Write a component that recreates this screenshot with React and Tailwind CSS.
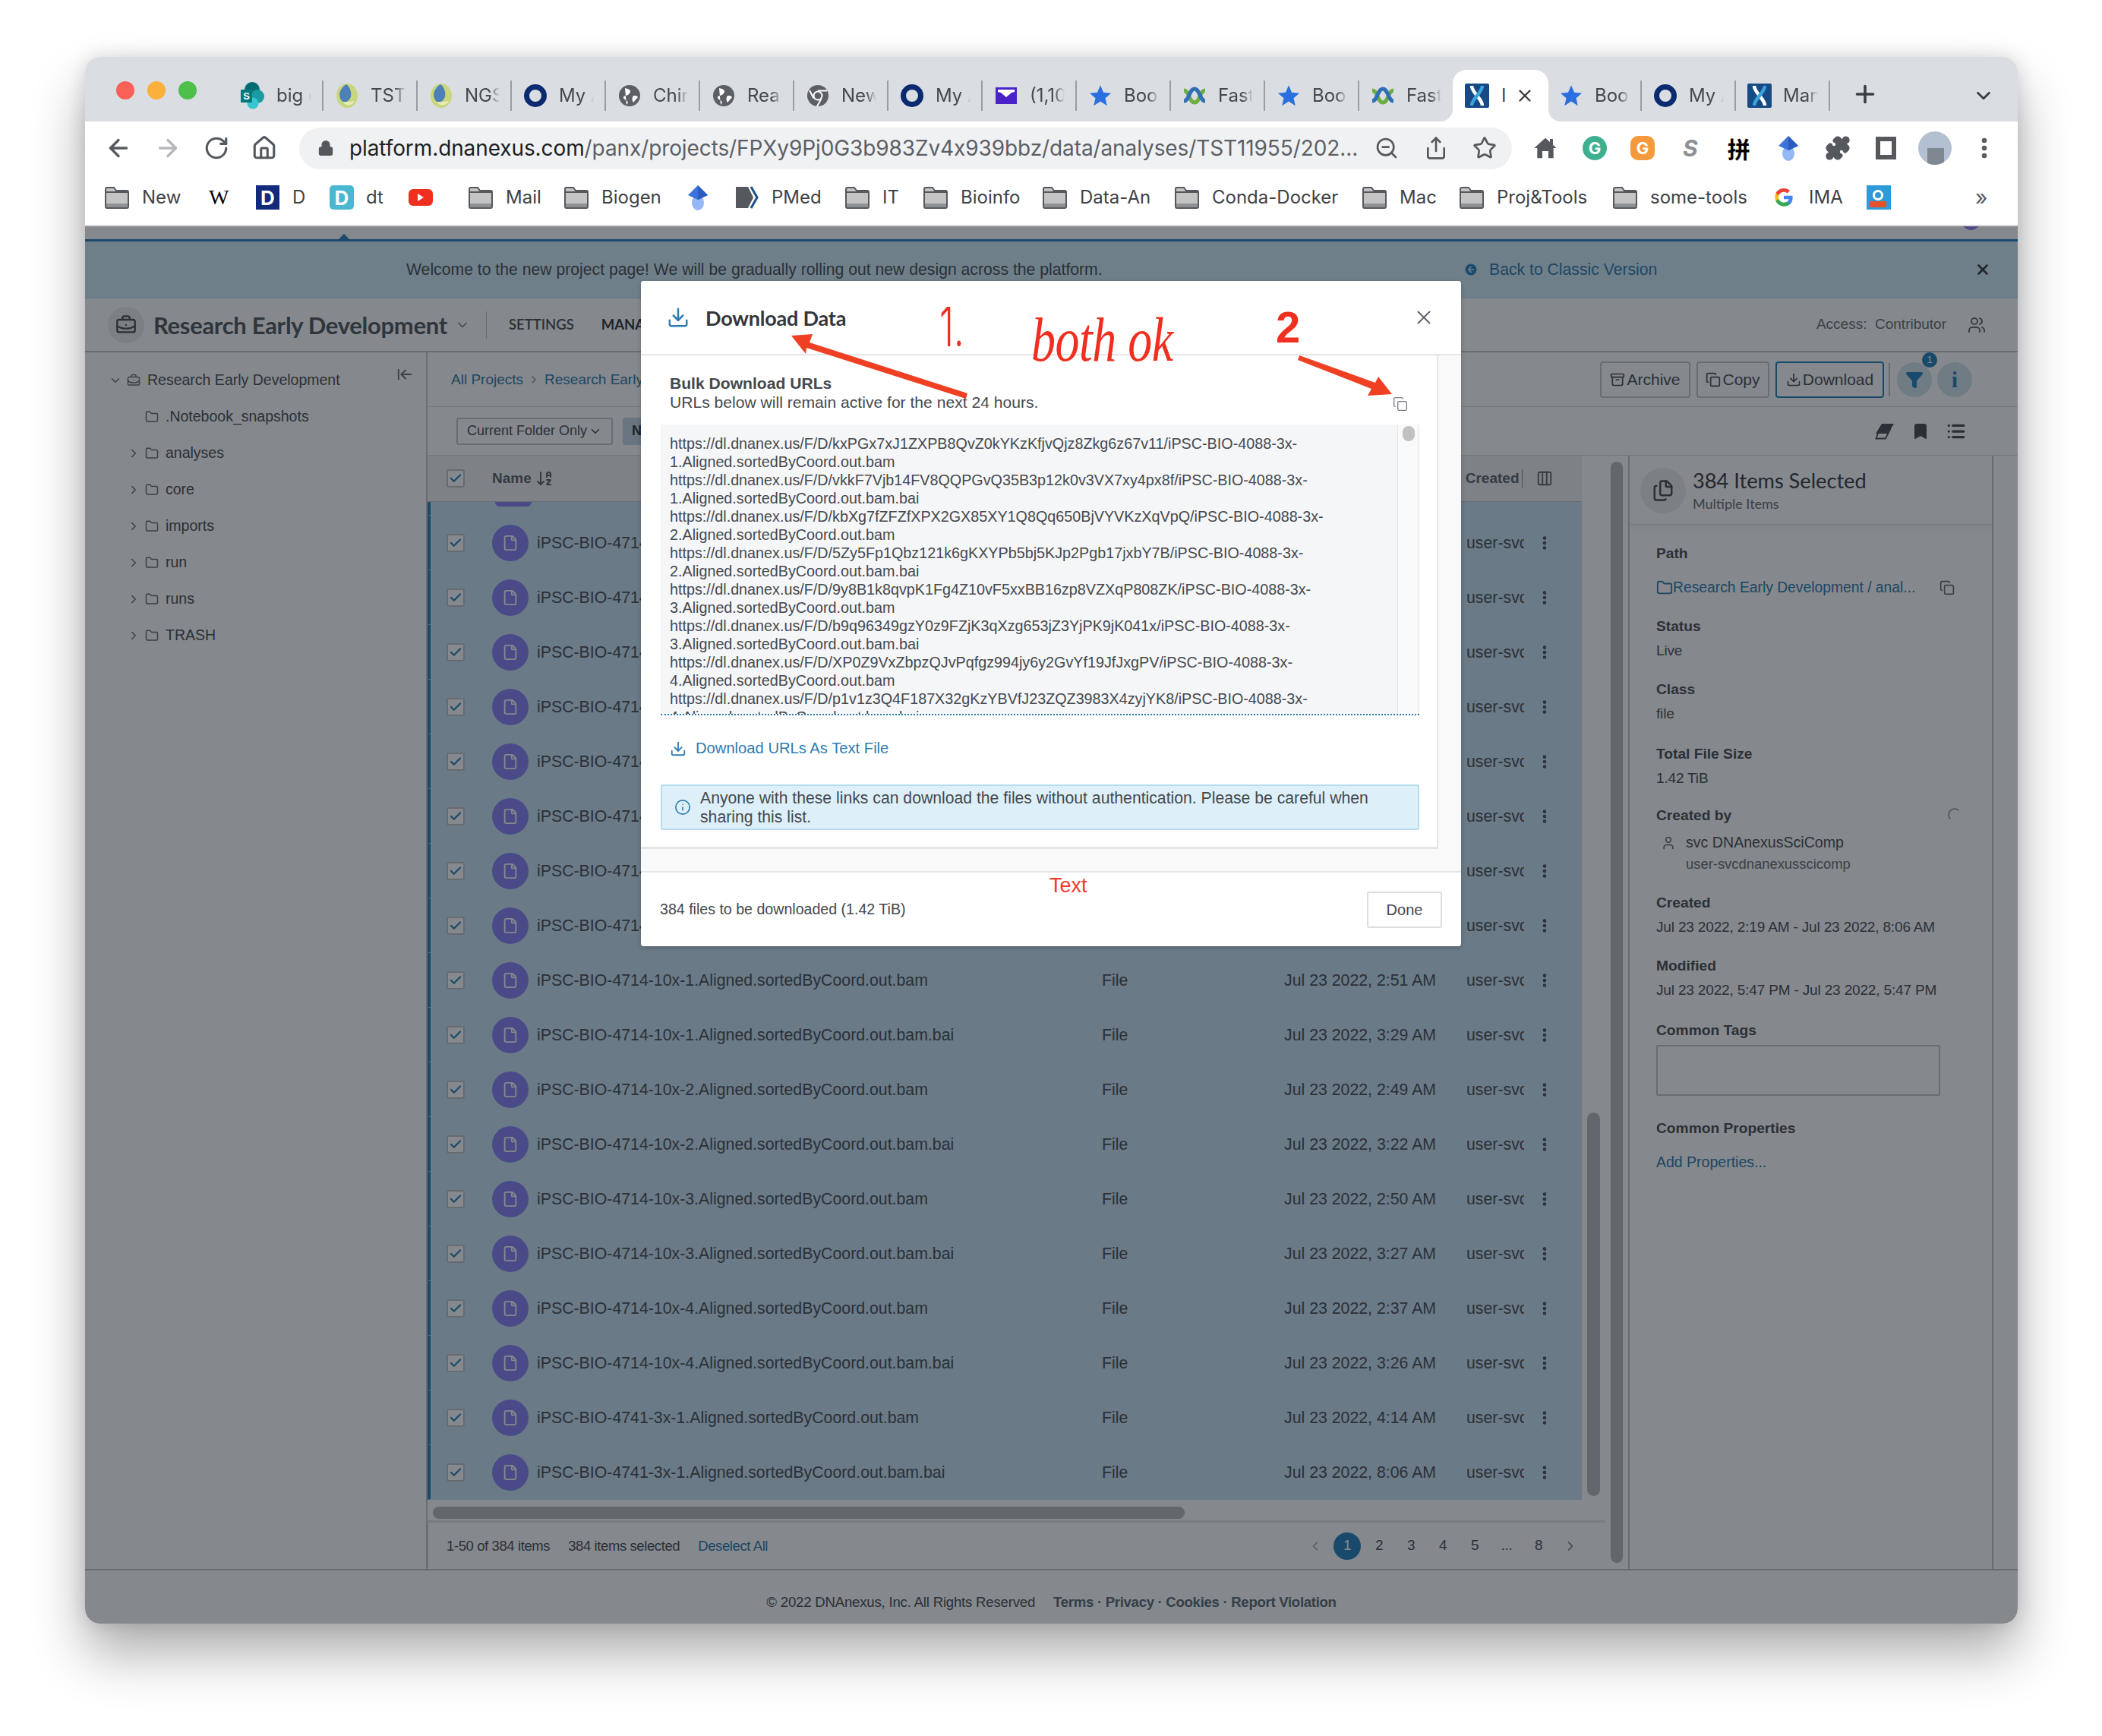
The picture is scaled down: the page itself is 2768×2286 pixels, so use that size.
import React from 'react';
import {
  ArrowLeft, ArrowRight, RotateCw, Home, Lock, ZoomOut, Share, Star, MoreVertical, Plus, X, ChevronDown,
  ChevronRight, ChevronLeft, Copy, Download, Archive, Folder, BriefcaseBusiness, Check, File, Files, Filter, Bookmark, Info,
  List, Columns3, User, Users, ArrowLeftToLine, ArrowDownAZ, ArrowLeftCircle, Puzzle,
} from 'lucide-react';

/* favicons, drawn by hand */
const Ring = () => (
  <svg width="30" height="32" viewBox="0 0 30 32"><circle cx="15" cy="16" r="11.5" fill="none" stroke="#0b2a6f" strokeWidth="7" /></svg>
);
const Globe = () => (
  <svg width="30" height="32" viewBox="0 0 30 32">
    <circle cx="15" cy="16" r="14" fill="#5c6066" />
    <path d="M9 6c5 1 9 3 6 7s-7 2-8 5 5 3 6 7l-2 3M20 16c3 0 5 0 6 2l-6 7c-2-3-2-6 0-9z" fill="#fff" />
  </svg>
);
const ChromeIcon = () => (
  <svg width="30" height="32" viewBox="0 0 30 32">
    <circle cx="15" cy="16" r="14" fill="#5c6066" />
    <circle cx="15" cy="16" r="6.5" fill="#fff" />
    <circle cx="15" cy="16" r="4.5" fill="#5c6066" />
    <path d="M15 9.5h12M9.5 19.5L4 9M19.5 20L14 30" stroke="#fff" strokeWidth="2" />
  </svg>
);
const Sphere = () => (
  <svg width="30" height="34" viewBox="0 0 30 34">
    <ellipse cx="15" cy="17" rx="14" ry="16" fill="#c9d67e" />
    <path d="M14 2C6 7 2 16 8 24c6 4 14-2 12-12-1-5-3-8-6-10z" fill="#4d7fb8" />
    <path d="M9 25c6 7 13 5 16-1-6 1-11 2-16 1z" fill="#e6ecb8" />
  </svg>
);
const SharePoint = () => (
  <svg width="34" height="38" viewBox="0 0 34 38">
    <circle cx="16" cy="11" r="10" fill="#036c70" />
    <circle cx="23" cy="20" r="9" fill="#1a9ba1" />
    <circle cx="17" cy="29" r="7.5" fill="#37c6d0" />
    <rect x="1" y="11" width="15" height="17" rx="1" fill="#03787c" />
    <text x="8.5" y="24" fontSize="13" fontWeight="700" fill="#fff" textAnchor="middle" fontFamily="Liberation Sans">S</text>
  </svg>
);
const Mail = () => (
  <svg width="30" height="32" viewBox="0 0 30 32">
    <rect x="1" y="5" width="28" height="22" fill="#4b22c9" />
    <path d="M4 8h22v3l-4 1-7 6-7-6-4-1z" fill="#fff" />
  </svg>
);
const BlueStar = () => (
  <svg width="30" height="32" viewBox="0 0 24 24"><path d="M12 1l3.2 7.6 8 .7-6 5.3 1.8 8L12 18l-7 4.6 1.8-8-6-5.3 8-.7z" fill="#2a6fe0" /></svg>
);
const Fast = () => (
  <svg width="34" height="30" viewBox="0 0 34 30" fill="none">
    <path d="M3 8c7 0 7 16 14 16S24 8 31 8" stroke="#6cae3f" strokeWidth="5" />
    <path d="M3 22c7 0 7-16 14-16s7 16 14 16" stroke="#2f6fb5" strokeWidth="5" />
  </svg>
);
const Dx = () => (
  <svg width="32" height="32" viewBox="0 0 32 32">
    <rect width="32" height="32" rx="2" fill="#174a85" />
    <path d="M9 3c0 9 14 17 14 26" stroke="#fff" strokeWidth="4.5" fill="none" />
    <path d="M23 3c0 9-14 17-14 26" stroke="#38a3dc" strokeWidth="4.5" fill="none" />
  </svg>
);
const Diamond = () => (
  <svg width="30" height="34" viewBox="0 0 30 34">
    <ellipse cx="15" cy="24" rx="8" ry="10" fill="#94b8f5" />
    <path d="M15 1l13 13-13 6L2 14z" fill="#3d74db" />
    <path d="M15 1v19l13-6z" fill="#2c5cc0" />
  </svg>
);
const BookmarkFolder = () => (
  <svg width="32" height="30" viewBox="0 0 32 30" className="shrink-0">
    <path d="M1 4a2 2 0 0 1 2-2h9l3 4h14a2 2 0 0 1 2 2v19a2 2 0 0 1-2 2H3a2 2 0 0 1-2-2z" fill="#c4c4c4" stroke="#55585d" strokeWidth="2" />
    <path d="M1 8h30" stroke="#55585d" strokeWidth="2" />
    <rect x="2" y="23" width="28" height="5" fill="#8f9194" />
  </svg>
);
const EraserIcon = () => (
  <svg width="26" height="22" viewBox="0 0 26 22">
    <path d="M9 1h16l-8 13H1z" fill="#4a4f54" />
    <path d="M6 8.500h14L14 20.500H1.500z" fill="none" stroke="#4a4f54" strokeWidth="1.800" />
  </svg>
);

const tabs = [
  { icon: <SharePoint />, label: 'big o' },
  { icon: <Sphere />, label: 'TST1' },
  { icon: <Sphere />, label: 'NGS' },
  { icon: <Ring />, label: 'My A' },
  { icon: <Globe />, label: 'Chir' },
  { icon: <Globe />, label: 'Rea' },
  { icon: <ChromeIcon />, label: 'New' },
  { icon: <Ring />, label: 'My A' },
  { icon: <Mail />, label: '(1,10' },
  { icon: <BlueStar />, label: 'Boo' },
  { icon: <Fast />, label: 'Fast' },
  { icon: <BlueStar />, label: 'Boo' },
  { icon: <Fast />, label: 'Fast', noSep: true },
  { active: true, icon: <Dx />, label: 'I' },
  { icon: <BlueStar />, label: 'Boo' },
  { icon: <Ring />, label: 'My A' },
  { icon: <Dx />, label: 'Man' },
];

function TabStrip() {
  return (
    <div className="flex h-[85px] shrink-0 bg-[#dadde2] pt-[17px] relative">
      <div className="flex gap-[17px] pl-[41px] pr-[43px] pt-[15px]">
        <span className="h-6 w-6 rounded-full bg-[#f96057]" />
        <span className="h-6 w-6 rounded-full bg-[#fbb03b]" />
        <span className="h-6 w-6 rounded-full bg-[#4dbf4a]" />
      </div>
      {tabs.map((t, i) =>
        t.active ? (
          <div key={i} className="relative flex h-[68px] w-[126px] shrink-0 items-center rounded-t-[18px] bg-white pl-[16px] -ml-px -mr-px">
            {t.icon}
            <span className="ml-[16px] text-[24px] text-[#45484d]">{t.label}</span>
            <X size={26} strokeWidth={2.2} className="ml-[12px] text-[#3a3d42]" />
            <span className="absolute -left-4 bottom-0 h-4 w-4 bg-white"><span className="block h-4 w-4 rounded-br-[16px] bg-[#dadde2]" /></span>
            <span className="absolute -right-4 bottom-0 h-4 w-4 bg-white"><span className="block h-4 w-4 rounded-bl-[16px] bg-[#dadde2]" /></span>
          </div>
        ) : (
          <div key={i} className="flex h-[68px] w-[124px] shrink-0 items-center">
            <div className={`flex h-[40px] w-[124px] items-center pl-[14px] ${t.noSep ? '' : 'border-r-2 border-[#9a9da2]'}`}>
              <span className="flex w-[34px] shrink-0 justify-center">{t.icon}</span>
              <span className="ml-[14px] w-[46px] overflow-hidden whitespace-nowrap text-[24px] text-[#45484d] [mask-image:linear-gradient(90deg,#000_70%,transparent)]">{t.label}</span>
            </div>
          </div>
        )
      )}
      <Plus size={36} strokeWidth={2.4} className="ml-[28px] mt-[14px] text-[#3a3d42]" />
      <ChevronDown size={30} strokeWidth={2.2} className="absolute right-[30px] top-[36px] text-[#3a3d42]" />
    </div>
  );
}

function BrowserToolbar() {
  return (
    <div className="flex h-[70px] shrink-0 items-center bg-white">
      <div className="flex w-[282px] items-center pl-[26px] gap-[29px]">
        <ArrowLeft size={36} strokeWidth={2.2} className="text-[#55585d]" />
        <ArrowRight size={36} strokeWidth={2.2} className="text-[#b5b7ba]" />
        <RotateCw size={34} strokeWidth={2.2} className="text-[#55585d]" />
        <Home size={34} strokeWidth={2.2} className="text-[#55585d]" />
      </div>
      <div className="flex h-[55px] w-[1597px] items-center rounded-full bg-[#f0f1f3] pl-[24px]">
        <Lock size={22} fill="#55585d" className="text-[#55585d]" />
        <span className="ml-[20px] w-[1320px] whitespace-nowrap text-[28px] tracking-[-0.1px] text-[#5c5f64]">
          <span className="text-[#1d1f22]">platform.dnanexus.com</span>/panx/projects/FPXy9Pj0G3b983Zv4x939bbz/data/analyses/TST11955/202...
        </span>
        <ZoomOut size={32} strokeWidth={2} className="ml-[30px] text-[#55585d]" />
        <Share size={32} strokeWidth={2} className="ml-[33px] text-[#55585d]" />
        <Star size={32} strokeWidth={2} className="ml-[32px] text-[#55585d]" />
      </div>
      <div className="flex items-center">
        <svg width="32" height="34" viewBox="0 0 24 24" className="ml-[28px]" fill="#55585d"><path d="M12 2 1 12h3v10h5v-7h6v7h5V12h3l-3.500-3.200V3h-3v3z" /></svg>
        <span className="ml-[33px] flex h-8 w-8 items-center justify-center rounded-full bg-[#3fb08f] text-[22px] font-bold text-white">G</span>
        <span className="ml-[31px] flex h-8 w-8 items-center justify-center rounded-[10px] bg-[#f59a3c] text-[22px] font-bold text-white">G</span>
        <span className="ml-[37px] text-[30px] font-bold italic text-[#8c8f93]">S</span>
        <span className="ml-[39px] text-[30px] font-bold text-black [font-family:'Noto_Sans_CJK_SC',sans-serif]">拼</span>
        <span className="ml-[35px]"><Diamond /></span>
        <Puzzle size={34} fill="#55585d" className="ml-[33px] text-[#55585d]" />
        <span className="ml-[33px] h-[30px] w-[27px] border-[6px] border-[#55585d]" />
        <span className="ml-[29px] relative h-[44px] w-[44px] overflow-hidden rounded-full bg-[#b2c0d2]">
          <span className="absolute bottom-0 left-[12px] h-[22px] w-[22px] bg-[#7f8790]" />
        </span>
        <MoreVertical size={34} strokeWidth={2.6} className="ml-[26px] text-[#55585d]" />
      </div>
    </div>
  );
}

const bookmarks = [
  { w: 'w-[140px]', folder: true, label: 'New' },
  { w: 'w-[59px]', icon: <span className="ml-[-3px] text-[28px] text-black [font-family:'Liberation_Serif',serif]">W</span> },
  { w: 'w-[97px]', icon: <span className="flex h-8 w-[31px] items-center justify-center bg-[#122a7c] text-[26px] font-bold text-white">D</span>, label: 'D', gap: 'gap-[17px]' },
  { w: 'w-[104px]', icon: <span className="flex h-8 w-8 items-center justify-center rounded-[5px] bg-[#4ab7d3] text-[26px] font-bold text-white">D</span>, label: 'dt', gap: 'gap-[16px]' },
  { w: 'w-[79px]', icon: <span className="flex h-[22px] w-8 items-center justify-center rounded-[6px] bg-[#f0301e]"><span className="h-0 w-0 border-y-[5px] border-l-[8px] border-y-transparent border-l-white" /></span> },
  { w: 'w-[126px]', folder: true, label: 'Mail' },
  { w: 'w-[161px]', folder: true, label: 'Biogen' },
  { w: 'w-[64px]', icon: <Diamond /> },
  { w: 'w-[145px]', icon: <svg width="32" height="32" viewBox="0 0 32 32"><path d="M1 2h16l7 14-7 14H1z" fill="#55585d" /><path d="M21 2l8 14-8 14" stroke="#1c4f8c" strokeWidth="3" fill="none" /></svg>, label: 'PMed', gap: 'gap-[16px]' },
  { w: 'w-[103px]', folder: true, label: 'IT' },
  { w: 'w-[157px]', folder: true, label: 'Bioinfo' },
  { w: 'w-[174px]', folder: true, label: 'Data-An' },
  { w: 'w-[247px]', folder: true, label: 'Conda-Docker' },
  { w: 'w-[128px]', folder: true, label: 'Mac' },
  { w: 'w-[202px]', folder: true, label: 'Proj&Tools' },
  { w: 'w-[211px]', folder: true, label: 'some-tools' },
  {
    w: 'w-[123px]',
    icon: (
      <svg width="28" height="30" viewBox="0 0 24 24">
        <path d="M22 12c0-.8 0-1.500-.2-2H12v4h5.600c-.3 1.400-1 2.500-2.200 3.300v2.700h3.500C21 18 22 15.300 22 12z" fill="#4285f4" />
        <path d="M12 22c2.800 0 5.100-.9 6.900-2.500l-3.500-2.700c-.9.600-2.100 1-3.400 1-2.700 0-5-1.800-5.800-4.300H3v2.800C4.700 19.800 8.100 22 12 22z" fill="#34a853" />
        <path d="M6.200 13.500c-.4-1.200-.4-2.500 0-3.700V7H3c-1.300 2.700-1.300 6.300 0 9z" fill="#fbbc05" />
        <path d="M12 5.800c1.500 0 2.900.5 3.900 1.500l3-3C17.100 2.700 14.800 1.800 12 1.800 8.100 1.800 4.700 4 3 7l3.200 2.800C7 7.500 9.300 5.800 12 5.800z" fill="#ea4335" />
      </svg>
    ),
    label: 'IMA',
    gap: 'gap-[19px]',
  },
  { w: 'w-[146px]', icon: <span className="relative h-8 w-8 bg-[#2e9bd8]"><span className="absolute left-[8px] top-[6px] h-[14px] w-[14px] rounded-full border-[3px] border-white" /><span className="absolute bottom-[3px] left-[4px] h-[8px] w-[22px] bg-[#e8502d]" /></span> },
];

function BookmarkBar() {
  return (
    <div className="flex h-[68px] shrink-0 items-center border-b-2 border-[#d9d9d9] bg-white pb-[6px] pl-[26px] text-[24px] text-[#3f4246]">
      {bookmarks.map((b, i) => (
        <div key={i} className={`flex shrink-0 items-center ${b.w} ${b.gap || 'gap-[17px]'}`}>
          {b.folder ? <BookmarkFolder /> : b.icon}
          {b.label && <span className="whitespace-nowrap">{b.label}</span>}
        </div>
      ))}
      <span className="-ml-[3px] text-[28px] text-[#55585d]">»</span>
    </div>
  );
}

function Banner() {
  return (
    <>
      <div className="relative h-[17px] overflow-hidden bg-white">
        <span className="absolute bottom-0 left-[334px] h-0 w-0 border-x-[7px] border-b-[7px] border-x-transparent border-b-[#2983bd]" />
        <span className="absolute right-[49px] top-[-20px] h-[25px] w-[25px] rounded-full bg-[#8b83f7]" />
      </div>
      <div className="h-[3px] bg-[#2983bd]" />
      <div className="flex h-[75px] items-center border-b border-[#b9d9e8] bg-[#d3edf9] pl-[423px] text-[21.200px] text-[#4a4f54]">
        <span className="w-[1392px]">Welcome to the new project page! We will be gradually rolling out new design across the platform.</span>
        <ArrowLeftCircle size={20} fill="#2983bd" className="text-[#d3edf9]" />
        <span className="ml-[14px] w-[640px] text-[#2f7cb0]">Back to Classic Version</span>
        <X size={22} strokeWidth={3} className="ml-[-1px] text-[#3a3d42]" />
      </div>
    </>
  );
}

function ProjectHeader() {
  return (
    <div className="flex h-[71px] items-center border-b-2 border-[#c6c9cc] bg-white pl-[30px]">
      <span className="flex h-12 w-12 items-center justify-center rounded-full bg-[#eceef0]"><BriefcaseBusiness size={28} className="text-[#4a4f54]" /></span>
      <span className="ml-[12px] mt-[2px] whitespace-nowrap text-[31px] font-bold tracking-[-0.3px] text-[#55595e] [font-family:Lato,sans-serif]">Research Early Development</span>
      <ChevronDown size={20} className="ml-[10px] text-[#7a7e83]" />
      <span className="ml-[21px] h-9 w-px bg-[#c6c9cc]" />
      <span className="ml-[29px] text-[18.500px] font-semibold text-[#4a4f54] [font-family:Lato,sans-serif]">SETTINGS</span>
      <span className="ml-[36px] text-[18.500px] font-bold text-[#33373c] [font-family:Lato,sans-serif]">MANAGE</span>
      <span className="ml-auto whitespace-pre text-[19px] text-[#6b6f74]">Access:  Contributor</span>
      <Users size={24} className="ml-[28px] mr-[42px] text-[#6b6f74]" />
    </div>
  );
}

const tree = ['.Notebook_snapshots', 'analyses', 'core', 'imports', 'run', 'runs', 'TRASH'];

function Sidebar() {
  return (
    <aside className="relative w-[451px] shrink-0 border-r-2 border-[#c6c9cc] bg-white pt-[13px] text-[19.500px] text-[#4a4f54]">
      <div className="flex h-12 items-center pl-[31px]">
        <ChevronDown size={18} className="text-[#6b6f74]" />
        <BriefcaseBusiness size={18} className="ml-[6px] text-[#6b6f74]" />
        <span className="ml-[9px]">Research Early Development</span>
      </div>
      {tree.map((name, i) => (
        <div key={name} className="flex h-12 items-center pl-[55px]">
          {i === 0 ? <span className="w-[18px]" /> : <ChevronRight size={18} className="text-[#6b6f74]" />}
          <Folder size={18} className="ml-[6px] text-[#6b6f74]" />
          <span className="ml-[9px]">{name}</span>
        </div>
      ))}
      <ArrowLeftToLine size={22} className="absolute right-[17px] top-[18px] text-[#6b6f74]" />
    </aside>
  );
}

const Dots = () => <MoreVertical size={22} strokeWidth={3} className="text-[#4a4f54]" />;

const Checkbox = () => (
  <span className="flex h-[24px] w-[24px] shrink-0 items-center justify-center rounded-[3px] border-2 border-[#c0c4c8] bg-white">
    <Check size={18} strokeWidth={3} className="text-[#2983bd]" />
  </span>
);

const rows = [
  ['iPSC-BIO-4714-3x-1.Aligned.sortedByCoord.out.bam', '2:19 AM'],
  ['iPSC-BIO-4714-3x-1.Aligned.sortedByCoord.out.bam.bai', '3:01 AM'],
  ['iPSC-BIO-4714-3x-2.Aligned.sortedByCoord.out.bam', '2:24 AM'],
  ['iPSC-BIO-4714-3x-2.Aligned.sortedByCoord.out.bam.bai', '3:11 AM'],
  ['iPSC-BIO-4714-3x-3.Aligned.sortedByCoord.out.bam', '2:31 AM'],
  ['iPSC-BIO-4714-3x-3.Aligned.sortedByCoord.out.bam.bai', '3:14 AM'],
  ['iPSC-BIO-4714-3x-4.Aligned.sortedByCoord.out.bam', '2:28 AM'],
  ['iPSC-BIO-4714-3x-4.Aligned.sortedByCoord.out.bam.bai', '3:09 AM'],
  ['iPSC-BIO-4714-10x-1.Aligned.sortedByCoord.out.bam', '2:51 AM'],
  ['iPSC-BIO-4714-10x-1.Aligned.sortedByCoord.out.bam.bai', '3:29 AM'],
  ['iPSC-BIO-4714-10x-2.Aligned.sortedByCoord.out.bam', '2:49 AM'],
  ['iPSC-BIO-4714-10x-2.Aligned.sortedByCoord.out.bam.bai', '3:22 AM'],
  ['iPSC-BIO-4714-10x-3.Aligned.sortedByCoord.out.bam', '2:50 AM'],
  ['iPSC-BIO-4714-10x-3.Aligned.sortedByCoord.out.bam.bai', '3:27 AM'],
  ['iPSC-BIO-4714-10x-4.Aligned.sortedByCoord.out.bam', '2:37 AM'],
  ['iPSC-BIO-4714-10x-4.Aligned.sortedByCoord.out.bam.bai', '3:26 AM'],
  ['iPSC-BIO-4741-3x-1.Aligned.sortedByCoord.out.bam', '4:14 AM'],
  ['iPSC-BIO-4741-3x-1.Aligned.sortedByCoord.out.bam.bai', '8:06 AM'],
];

function FileRow({ name, time }) {
  return (
    <div className="flex h-[72px] items-center border-b border-[#d3e3f1] border-l-[4px] border-l-[#2983bd] bg-[#c9e2f5] pl-[21px] text-[21.300px] text-[#4a4f54]">
      <Checkbox />
      <span className="ml-[36px] flex h-12 w-12 shrink-0 items-center justify-center rounded-full bg-[#8b83f7]">
        <File size={22} className="text-white" />
      </span>
      <span className="ml-[11px] mt-[2px] w-[744px] whitespace-nowrap">{name}</span>
      <span className="mt-[2px] w-[240px]">File</span>
      <span className="mt-[2px] w-[240px] whitespace-nowrap">Jul 23 2022, {time}</span>
      <span className="mt-[2px] w-[76px] overflow-hidden whitespace-nowrap">user-svc</span>
      <span className="ml-[16px]"><Dots /></span>
    </div>
  );
}

function Pagination() {
  return (
    <div className="flex items-center text-[19px] text-[#4a4f54]">
      <ChevronLeft size={20} className="mr-[14px] text-[#a9adb1]" />
      <span className="flex h-[36px] w-[36px] items-center justify-center rounded-full bg-[#2983bd] text-white">1</span>
      {['2', '3', '4', '5', '...', '8'].map((p) => (
        <span key={p} className="ml-[6px] w-[36px] text-center">{p}</span>
      ))}
      <ChevronRight size={20} className="ml-[14px] text-[#7a7e83]" />
    </div>
  );
}

function FileTable() {
  return (
    <div className="relative flex w-[1550px] shrink-0 flex-col">
      <div className="flex h-[61px] w-[1520px] items-center border-b border-[#c6c9cc] bg-[#f1f2f3] pl-[25px] text-[19px] font-semibold text-[#5f6368]">
        <Checkbox />
        <span className="ml-[36px]">Name</span>
        <ArrowDownAZ size={24} className="ml-[5px]" />
        <span className="ml-[1201px]">Created</span>
        <span className="ml-[3px] h-6 w-px bg-[#8a8e92]" />
        <Columns3 size={22} className="ml-[18px]" />
      </div>
      <div className="h-[18px] w-[1520px] border-b border-[#d3e3f1] border-l-[4px] border-l-[#2983bd] bg-[#c9e2f5]">
        <span className="ml-[85px] block h-[6px] w-12 rounded-b-[24px] bg-[#8b83f7]" />
      </div>
      <div className="w-[1520px]">
        {rows.map(([name, time]) => (
          <FileRow key={name} name={name} time={time} />
        ))}
      </div>
      <div className="flex h-[30px] items-start border-b-[3px] border-[#e4e5e6] pl-[7px] pt-[9px]">
        <span className="h-[16px] w-[990px] rounded-full bg-[#b8bdc2]" />
      </div>
      <div className="flex h-[59px] items-center border-l border-[#d0d2d4] pl-[24px] pt-[2px] text-[18.500px] tracking-[-0.4px] text-[#4a4f54]">
        <span>1-50 of 384 items</span>
        <span className="ml-[24px]">384 items selected</span>
        <span className="ml-[24px] text-[#2f7cb0]">Deselect All</span>
        <div className="ml-auto mr-[35px]"><Pagination /></div>
      </div>
      <span className="absolute left-[1527px] top-[865px] h-[505px] w-[17px] rounded-full bg-[#b8bdc2]" />
    </div>
  );
}

function Field({ label, value, className }) {
  return (
    <div className={className}>
      <div className="h-6 text-[19.200px] font-bold leading-6 text-[#4a4f54]">{label}</div>
      <div className="mt-[8px] h-6 whitespace-nowrap text-[19px] leading-6 tracking-[-0.16px] text-[#4a4f54]">{value}</div>
    </div>
  );
}

function DetailPanel() {
  return (
    <div className="w-[481px] shrink-0 border-x-2 border-[#c6c9cc] bg-white">
      <div className="flex h-[91px] items-start border-b border-[#dcdee0] pl-[14px] pt-[16px] shadow-[0_6px_10px_rgba(0,0,0,0.04)]">
        <span className="flex h-[60px] w-[60px] items-center justify-center rounded-full bg-[#eceef0]">
          <Files size={30} className="text-[#4a4f54]" />
        </span>
        <div className="ml-[9px]">
          <div className="text-[27.200px] leading-[34px] text-[#3a3d42] [font-family:Lato,sans-serif]">384 Items Selected</div>
          <div className="text-[18px] leading-[26px] text-[#6b6f74] [font-family:Lato,sans-serif]">Multiple Items</div>
        </div>
      </div>
      <div className="relative pl-[35px] pt-[26px]">
        <div className="h-6 text-[19.200px] font-bold leading-6 text-[#4a4f54]">Path</div>
        <div className="mt-[21px] flex h-6 items-center text-[19.300px] text-[#2f7cb0]">
          <Folder size={22} />
          <span>Research Early Development / anal...</span>
          <Copy size={20} className="ml-[32px] text-[#6b6f74]" />
        </div>
        <Field label="Status" value="Live" className="mt-[27px]" />
        <Field label="Class" value="file" className="mt-[27px]" />
        <Field label="Total File Size" value="1.42 TiB" className="mt-[29px]" />
        <div className="mt-[25px] h-6 text-[19.200px] font-bold leading-6 text-[#4a4f54]">Created by</div>
        <div className="mt-[12px] flex h-6 items-center text-[19.600px] text-[#4a4f54]">
          <User size={20} className="ml-[6px] mr-[13px] text-[#6b6f74]" />
          svc DNAnexusSciComp
        </div>
        <div className="ml-[39px] mt-[4px] text-[18.400px] leading-6 text-[#6b6f74]">user-svcdnanexusscicomp</div>
        <Field label="Created" value="Jul 23 2022, 2:19 AM - Jul 23 2022, 8:06 AM" className="mt-[27px]" />
        <Field label="Modified" value="Jul 23 2022, 5:47 PM - Jul 23 2022, 5:47 PM" className="mt-[27px]" />
        <div className="mt-[29px] h-6 text-[19.200px] font-bold leading-6 text-[#4a4f54]">Common Tags</div>
        <div className="mt-[7px] h-[67px] w-[374px] rounded-[2px] border-2 border-[#c6c9cc]" />
        <div className="mt-[31px] h-6 text-[19.200px] font-bold leading-6 text-[#4a4f54]">Common Properties</div>
        <div className="mt-[20px] h-6 text-[19.500px] leading-6 text-[#2f7cb0]">Add Properties...</div>
        <span className="absolute right-[40px] top-[373px] h-[18px] w-[18px] rounded-full border-2 border-transparent border-l-[#a5a9ad] border-t-[#a5a9ad]" />
      </div>
    </div>
  );
}

function ActionButton({ icon, label, active, w }) {
  return (
    <span className={`flex h-[48px] items-center justify-center gap-[2px] rounded-[4px] border-2 text-[21px] ${w} ${active ? 'border-[#2983bd]' : 'border-[#c6c9cc]'}`}>
      {icon}
      {label}
    </span>
  );
}

function ContentArea() {
  return (
    <div className="flex min-w-0 flex-1 flex-col bg-white">
      <div className="flex h-[72px] items-center border-b border-[#dcdee0] pl-[31px] pr-[60px] text-[19px] text-[#2f7cb0]">
        <span className="mt-[2px]">All Projects</span>
        <ChevronRight size={16} className="mx-[6px] text-[#8a8e92]" />
        <span className="mt-[2px]">Research Early Data</span>
        <div className="ml-auto flex items-center gap-[8px] text-[#4a4f54]">
          <ActionButton icon={<Archive size={20} />} label="Archive" w="w-[119px]" />
          <ActionButton icon={<Copy size={20} />} label="Copy" w="w-[96px]" />
          <ActionButton icon={<Download size={20} />} label="Download" w="w-[143px]" active />
          <span className="-ml-[2px] mr-[1px] h-[44px] w-[2px] bg-[#c6c9cc]" />
          <span className="relative flex h-[46px] w-[46px] items-center justify-center rounded-full bg-[#d5e6ef] text-[#2983bd]">
            <Filter size={24} fill="#2983bd" />
            <span className="absolute -right-[7px] -top-[13px] flex h-5 w-5 items-center justify-center rounded-full bg-[#2983bd] text-[13px] text-white">1</span>
          </span>
          <span className="-ml-[1px] flex h-[46px] w-[46px] items-center justify-center rounded-full bg-[#d5e6ef] text-[30px] font-bold leading-none text-[#2983bd] [font-family:'Liberation_Serif',serif]">
            i
          </span>
        </div>
      </div>
      <div className="flex h-[64px] items-center border-b border-[#dcdee0] pl-[38px] pr-[68px]">
        <span className="flex h-[36px] w-[206px] items-center justify-between rounded-[3px] border-2 border-[#c6c9cc] px-[12px] text-[18px] text-[#4a4f54]">
          Current Folder Only <ChevronDown size={18} />
        </span>
        <span className="ml-[13px] flex h-[36px] w-[60px] items-center rounded-[3px] bg-[#c4d7e4] px-[12px] text-[18px] font-bold text-[#33373c]">New</span>
        <div className="ml-auto flex items-center gap-[22px] text-[#4a4f54]">
          <EraserIcon />
          <Bookmark size={24} fill="#4a4f54" />
          <List size={26} strokeWidth={3} />
        </div>
      </div>
      <div className="flex flex-1">
        <FileTable />
        <div className="w-[31px] shrink-0 pl-[8px] pt-[8px]">
          <span className="block h-[1450px] w-[16px] rounded-full bg-[#b8bdc2]" />
        </div>
        <DetailPanel />
      </div>
    </div>
  );
}

const urlLines = [
  'https://dl.dnanex.us/F/D/kxPGx7xJ1ZXPB8QvZ0kYKzKfjvQjz8Zkg6z67v11/iPSC-BIO-4088-3x-',
  '1.Aligned.sortedByCoord.out.bam',
  'https://dl.dnanex.us/F/D/vkkF7Vjb14FV8QQPGvQ35B3p12k0v3VX7xy4px8f/iPSC-BIO-4088-3x-',
  '1.Aligned.sortedByCoord.out.bam.bai',
  'https://dl.dnanex.us/F/D/kbXg7fZFZfXPX2GX85XY1Q8Qq650BjVYVKzXqVpQ/iPSC-BIO-4088-3x-',
  '2.Aligned.sortedByCoord.out.bam',
  'https://dl.dnanex.us/F/D/5Zy5Fp1Qbz121k6gKXYPb5bj5KJp2Pgb17jxbY7B/iPSC-BIO-4088-3x-',
  '2.Aligned.sortedByCoord.out.bam.bai',
  'https://dl.dnanex.us/F/D/9y8B1k8qvpK1Fg4Z10vF5xxBB16zp8VZXqP808ZK/iPSC-BIO-4088-3x-',
  '3.Aligned.sortedByCoord.out.bam',
  'https://dl.dnanex.us/F/D/b9q96349gzY0z9FZjK3qXzg653jZ3YjPK9jK041x/iPSC-BIO-4088-3x-',
  '3.Aligned.sortedByCoord.out.bam.bai',
  'https://dl.dnanex.us/F/D/XP0Z9VxZbpzQJvPqfgz994jy6y2GvYf19JfJxgPV/iPSC-BIO-4088-3x-',
  '4.Aligned.sortedByCoord.out.bam',
  'https://dl.dnanex.us/F/D/p1v1z3Q4F187X32gKzYBVfJ23ZQZ3983X4zyjYK8/iPSC-BIO-4088-3x-',
  '4.Aligned.sortedByCoord.out.bam.bai',
];

function Modal() {
  return (
    <div className="absolute left-[732px] top-[72px] flex h-[876px] w-[1080px] flex-col rounded-[4px] bg-[#f9f9f9] text-[#45494e] shadow-[0_2px_6px_rgba(0,0,0,0.2)]">
      <div className="flex h-[98px] shrink-0 items-center rounded-t-[4px] border-b-2 border-[#e4e5e6] bg-white pl-[34px]">
        <Download size={30} strokeWidth={2} className="text-[#2f7cb0]" />
        <span className="ml-[21px] mt-[2px] text-[27px] font-bold tracking-[-0.2px] text-[#33373c] [font-family:Lato,sans-serif]">Download Data</span>
        <X size={30} strokeWidth={1.6} className="ml-auto mr-[34px] text-[#5f6368]" />
      </div>
      <div className="h-[650px] w-[1050px] shrink-0 border-b-[3px] border-r-2 border-[#e4e5e6] bg-white">
        <div className="relative px-[26px]">
          <div className="flex h-[91px] flex-col pl-[12px] pt-[24px] text-[21.100px] leading-[25px]">
            <span className="font-bold">Bulk Download URLs</span>
            <span>URLs below will remain active for the next 24 hours.</span>
          </div>
          <Copy size={20} strokeWidth={1.6} className="absolute right-[38px] top-[54px] text-[#7a7e83]" />
          <div className="relative h-[383px] w-[999px] overflow-hidden border-b-2 border-dotted border-[#2f7cb0] bg-[#f5f6f8] pl-[12px] pt-[13px] text-[19.750px] leading-[24px]">
            {urlLines.map((line, i) => (
              <div key={i} className="whitespace-nowrap">{line}</div>
            ))}
            <div className="absolute bottom-0 right-0 top-0 w-[29px] border-x border-[#e4e5e6] bg-[#f8f9fa]">
              <span className="absolute left-[6px] top-[2px] h-[20px] w-[16px] rounded-full bg-[#c1c1c1]" />
            </div>
          </div>
          <div className="flex h-[87px] items-center pl-[12px] text-[#2f7cb0]">
            <Download size={22} strokeWidth={2} />
            <span className="ml-[12px] text-[20.200px]">Download URLs As Text File</span>
          </div>
          <div className="mt-[4px] flex h-[60px] w-[999px] items-center rounded-[3px] border-2 border-[#b5dcf0] bg-[#ddf0f9] pl-[16px] text-[21.200px] leading-[25px]">
            <Info size={22} strokeWidth={1.8} className="shrink-0 text-[#2f7cb0]" />
            <span className="ml-[12px] w-[920px]">Anyone with these links can download the files without authentication. Please be careful when sharing this list.</span>
          </div>
        </div>
      </div>
      <div className="mt-[29px] flex flex-1 items-center rounded-b-[4px] border-t-2 border-[#e4e5e6] bg-white pl-[25px] pr-[25px] text-[19.600px]">
        <span>384 files to be downloaded (1.42 TiB)</span>
        <span className="ml-auto flex h-[48px] w-[99px] items-center justify-center rounded-[3px] border-2 border-[#dcdee0] text-[20px]">Done</span>
      </div>

      {/* red markup drawn on top of the screenshot */}
      <svg className="absolute left-0 top-0" width="1080" height="876" fill="#ef4023">
        <polygon points="198,72 226,70 222,81 430,148 428,155 218,88 217,96" />
        <polygon points="867,98 967,134 971,126 989,149 957,151 962,142 865,104" />
      </svg>
      <span className="absolute left-[393px] top-[24px] origin-top-left scale-y-150 text-[48px] font-light leading-[48px] text-[#ef2f1f] [font-family:Inter,sans-serif]">1.</span>
      <span className="absolute left-[514px] top-[52px] origin-top-left scale-y-[1.3] whitespace-nowrap text-[64px] leading-[40px] tracking-[-0.5px] text-[#ef2f1f] [font-family:'Liberation_Serif',serif] italic">both ok</span>
      <span className="absolute left-[836px] top-[36px] text-[58px] font-bold leading-[50px] text-[#ef2f1f] [font-family:'Liberation_Sans',sans-serif]">2</span>
      <span className="absolute left-[538px] top-[780px] text-[27px] leading-[32px] text-[#ef3a2b] [font-family:'Liberation_Sans',sans-serif]">Text</span>
    </div>
  );
}

export default function App() {
  return (
    <div className="h-[2286px] w-[2768px] overflow-hidden bg-white pl-[112px] pt-[75px] [font-family:'Liberation_Sans',Arial,sans-serif]">
      <div className="flex h-[2063px] w-[2545px] flex-col overflow-hidden rounded-[20px] shadow-[0_40px_70px_rgba(0,0,0,0.32),0_0_24px_rgba(0,0,0,0.14)]">
        <div className="[font-family:Inter,sans-serif]">
          <TabStrip />
          <BrowserToolbar />
          <BookmarkBar />
        </div>
        <div className="relative flex min-h-0 flex-1 flex-col bg-white">
          <Banner />
          <ProjectHeader />
          <div className="flex min-h-0 flex-1">
            <Sidebar />
            <ContentArea />
          </div>
          <div className="flex h-[72px] shrink-0 items-center justify-center border-t-2 border-[#c6c9cc] pt-[14px] text-[18.600px] text-[#4a4f54]">
            <span className="tracking-[-0.2px]">© 2022 DNAnexus, Inc. All Rights Reserved</span>
            <span className="ml-[24px] font-bold tracking-[-0.3px] text-[#5a6c78]">Terms · Privacy · Cookies · Report Violation</span>
          </div>
          {/* backdrop behind the modal */}
          <div className="absolute inset-0 bg-[#0b1119]/50" />
          <Modal />
        </div>
      </div>
    </div>
  );
}
